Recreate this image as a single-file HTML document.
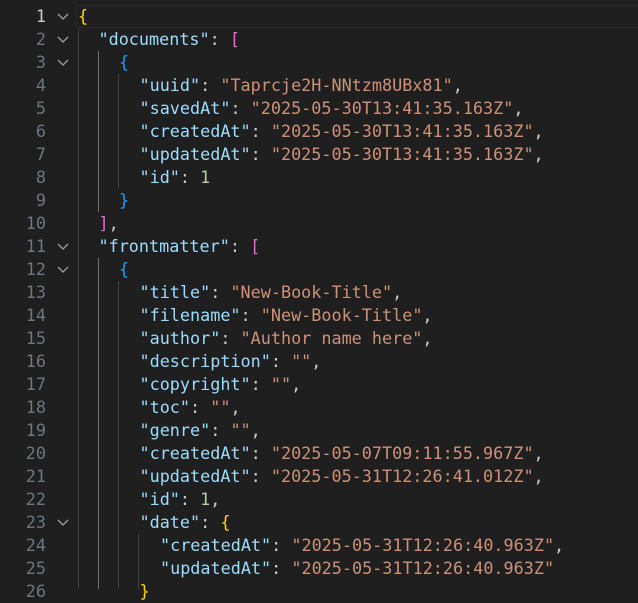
<!DOCTYPE html>
<html><head><style>
body{margin:0;width:638px;height:589px;overflow:hidden;background:#1f1f1f;font-family:"DejaVu Sans Mono","Liberation Mono",monospace;font-size:16.8px;}
.l{position:absolute;left:0;height:23px;line-height:23px;width:638px;white-space:pre;}
.n{position:absolute;right:592px;color:#6e7681;text-align:right;}
.c{position:absolute;left:78px;color:#cccccc;}
.f{position:absolute;left:56px;top:0;color:#8b8b8b;}
.k{color:#9cdcfe}.s{color:#ce9178}.d{color:#b5cea8}
.y{color:#ffd700}.p{color:#da70d6}.b{color:#179fff}
.g{position:absolute;width:1px;background:#404040;}
</style></head><body>
<div style="position:absolute;left:76px;top:5px;width:562px;height:21px;border:1px solid #2a2a2a;"></div>
<div class="g" style="left:78px;top:28px;height:561px"></div>
<div class="g" style="left:98px;top:51px;height:161px;background:#707070"></div>
<div class="g" style="left:98px;top:258px;height:331px;background:#707070"></div>
<div class="g" style="left:118px;top:74px;height:115px"></div>
<div class="g" style="left:118px;top:281px;height:308px"></div>
<div class="g" style="left:138px;top:534px;height:55px"></div>
<div id="c"></div>
<script>
const L=[
['<span class="y">{</span>',0,1],
['<span class="k">"documents"</span>: <span class="p">[</span>',1,1],
['<span class="b">{</span>',2,1],
['<span class="k">"uuid"</span>: <span class="s">"Taprcje2H-NNtzm8UBx81"</span>,',3],
['<span class="k">"savedAt"</span>: <span class="s">"2025-05-30T13:41:35.163Z"</span>,',3],
['<span class="k">"createdAt"</span>: <span class="s">"2025-05-30T13:41:35.163Z"</span>,',3],
['<span class="k">"updatedAt"</span>: <span class="s">"2025-05-30T13:41:35.163Z"</span>,',3],
['<span class="k">"id"</span>: <span class="d">1</span>',3],
['<span class="b">}</span>',2],
['<span class="p">]</span>,',1],
['<span class="k">"frontmatter"</span>: <span class="p">[</span>',1,1],
['<span class="b">{</span>',2,1],
['<span class="k">"title"</span>: <span class="s">"New-Book-Title"</span>,',3],
['<span class="k">"filename"</span>: <span class="s">"New-Book-Title"</span>,',3],
['<span class="k">"author"</span>: <span class="s">"Author name here"</span>,',3],
['<span class="k">"description"</span>: <span class="s">""</span>,',3],
['<span class="k">"copyright"</span>: <span class="s">""</span>,',3],
['<span class="k">"toc"</span>: <span class="s">""</span>,',3],
['<span class="k">"genre"</span>: <span class="s">""</span>,',3],
['<span class="k">"createdAt"</span>: <span class="s">"2025-05-07T09:11:55.967Z"</span>,',3],
['<span class="k">"updatedAt"</span>: <span class="s">"2025-05-31T12:26:41.012Z"</span>,',3],
['<span class="k">"id"</span>: <span class="d">1</span>,',3],
['<span class="k">"date"</span>: <span class="y">{</span>',3,1],
['<span class="k">"createdAt"</span>: <span class="s">"2025-05-31T12:26:40.963Z"</span>,',4],
['<span class="k">"updatedAt"</span>: <span class="s">"2025-05-31T12:26:40.963Z"</span>',4],
['<span class="y">}</span>',3]];
let h='';L.forEach((r,i)=>{const t=5+i*23;
h+=`<div class="l" style="top:${t}px"><span class="n"${i==0?' style="color:#cccccc"':''}>${i+1}</span>${r[2]?'<span class="f"><svg width="14" height="23" viewBox="0 0 14 23"><path d="M2 9l5 5 5-5" fill="none" stroke="#a0a0a0" stroke-width="1.3"/></svg></span>':''}<span class="c" style="left:${78+r[1]*20.5}px">${r[0]}</span></div>`;});
document.getElementById('c').innerHTML=h;
</script>
</body></html>
